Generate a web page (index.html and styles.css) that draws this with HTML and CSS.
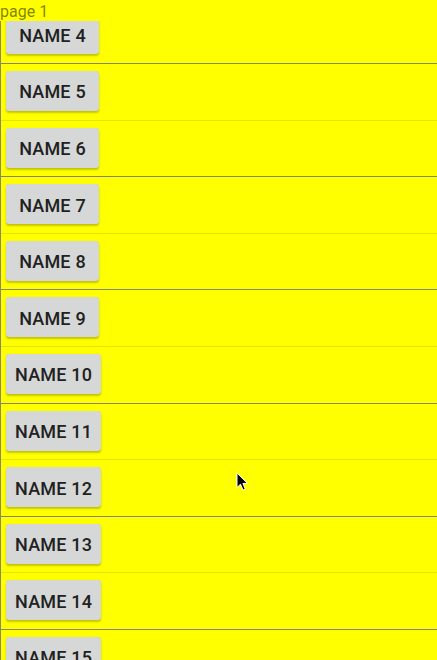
FILE: index.html
```html
<!DOCTYPE html>
<html lang="en">
<head>
<meta charset="utf-8">
<title>List</title>
<link rel="stylesheet" href="styles.css">
</head>
<body>
<div class="screen">
  <div class="page-label">page 1</div>
  <ul class="list">
    <li class="row row--dark"><button class="btn">NAME 4</button></li>
    <li class="row row--light"><button class="btn">NAME 5</button></li>
    <li class="row row--dark"><button class="btn">NAME 6</button></li>
    <li class="row row--light"><button class="btn">NAME 7</button></li>
    <li class="row row--dark"><button class="btn">NAME 8</button></li>
    <li class="row row--light"><button class="btn">NAME 9</button></li>
    <li class="row row--dark"><button class="btn">NAME 10</button></li>
    <li class="row row--light"><button class="btn">NAME 11</button></li>
    <li class="row row--dark"><button class="btn">NAME 12</button></li>
    <li class="row row--light"><button class="btn">NAME 13</button></li>
    <li class="row row--dark"><button class="btn">NAME 14</button></li>
    <li class="row row--light"><button class="btn">NAME 15</button></li>
  </ul>
  <svg class="cursor" width="13" height="20" viewBox="0 0 13 20">
    <path d="M1 1 L1 15.5 L4.5 12.2 L7 18 L9.3 17 L6.9 11.4 L11.5 11.4 Z" fill="#000" stroke="#fff" stroke-width="1" stroke-linejoin="round"/>
  </svg>
</div>
</body>
</html>
```

FILE: styles.css
```css
html, body {
  margin: 0;
  padding: 0;
  background: #ffff00;
  height: 660px;
  overflow: hidden;
}

.screen {
  position: relative;
  height: 660px;
  overflow: hidden;
  font-family: Roboto, "Noto Sans", sans-serif;
  background: #ffff00;
}

.page-label {
  position: absolute;
  top: 0;
  left: 0;
  right: 0;
  height: 21px;
  background: #ffff00;
  color: rgba(0, 0, 0, 0.5);
  font-size: 16px;
  line-height: 23px;
  z-index: 2;
}

.list {
  list-style: none;
  margin: 0;
  padding: 7.4px 0 0 0;
  border-left: 1px solid #8a8a6a;
}

.row {
  box-sizing: border-box;
  height: 56.6px;
  padding: 7px 0 0 5px;
  display: flex;
  align-items: flex-start;
}

.row--dark {
  border-bottom: 1px solid #86866e;
}

.row--light {
  border-bottom: 1px solid rgba(0, 0, 0, 0.1);
}

.btn {
  height: 40px;
  min-width: 93px;
  padding: 2px 9px 0 9px;
  border: 0;
  border-radius: 3px;
  background: #d6d7d7;
  color: #212121;
  font-family: Roboto, "Noto Sans", sans-serif;
  font-weight: 500;
  font-size: 18px;
  letter-spacing: 0.2px;
  box-shadow: 0 2px 2px rgba(0, 0, 0, 0.22), 0 0 1px rgba(0, 0, 0, 0.12);
  cursor: default;
}

.cursor {
  position: absolute;
  left: 236px;
  top: 472px;
  z-index: 3;
}
```
